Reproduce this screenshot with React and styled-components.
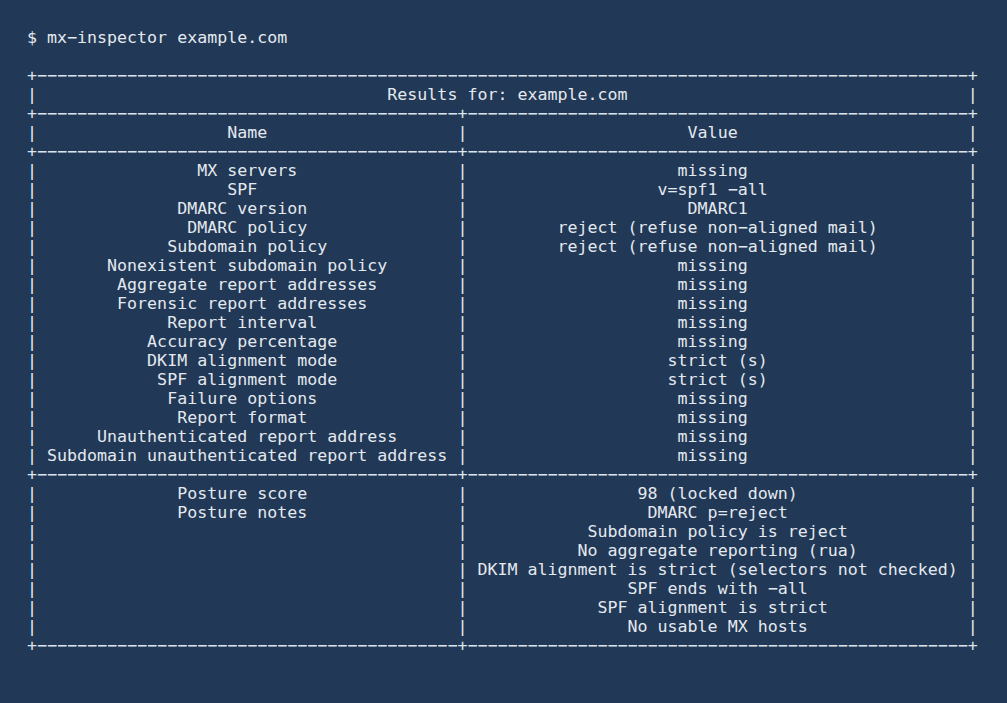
import React from "react";
import styled, { createGlobalStyle } from "styled-components";

const GlobalStyle = createGlobalStyle`
    html, body {
        margin: 0;
        padding: 0;
        background: #213856;
    }
`;

const Screen = styled.div`
    min-height: 100vh;
    box-sizing: border-box;
    padding: 28px 27px;
    background: #213856;
    color: #e4e9ef;
    font-family: "DejaVu Sans Mono", "Liberation Mono", monospace;
    font-size: 16.64px;
    line-height: 19px;
`;

const Output = styled.pre`
    margin: 0;
    font: inherit;
    white-space: pre;
`;

const Line = styled.div`
    height: 19px;
    color: ${p => (p.$border ? "#dde3ea" : "inherit")};
`;

const W1 = 42;
const W2 = 50;
const DASH = "−";

// same centering rule as python's str.center
const center = (s, w) => {
    const pad = w - s.length;
    if (pad <= 0) return s;
    const left = Math.floor(pad / 2) + (pad & w & 1);
    return " ".repeat(left) + s + " ".repeat(pad - left);
};

const sep = "+" + DASH.repeat(W1) + "+" + DASH.repeat(W2) + "+";
const topSep = "+" + DASH.repeat(W1 + W2 + 1) + "+";
const row = (a, b) => "|" + center(a, W1) + "|" + center(b, W2) + "|";

const records = [
    ["MX servers", "missing"],
    ["SPF", "v=spf1 −all"],
    ["DMARC version", "DMARC1"],
    ["DMARC policy", "reject (refuse non−aligned mail)"],
    ["Subdomain policy", "reject (refuse non−aligned mail)"],
    ["Nonexistent subdomain policy", "missing"],
    ["Aggregate report addresses", "missing"],
    ["Forensic report addresses", "missing"],
    ["Report interval", "missing"],
    ["Accuracy percentage", "missing"],
    ["DKIM alignment mode", "strict (s)"],
    ["SPF alignment mode", "strict (s)"],
    ["Failure options", "missing"],
    ["Report format", "missing"],
    ["Unauthenticated report address", "missing"],
    ["Subdomain unauthenticated report address", "missing"],
];

const posture = [
    ["Posture score", "98 (locked down)"],
    ["Posture notes", "DMARC p=reject"],
    ["", "Subdomain policy is reject"],
    ["", "No aggregate reporting (rua)"],
    ["", "DKIM alignment is strict (selectors not checked)"],
    ["", "SPF ends with −all"],
    ["", "SPF alignment is strict"],
    ["", "No usable MX hosts"],
];

const lines = [
    { text: "$ mx−inspector example.com" },
    { text: " " },
    { text: topSep, border: true },
    { text: "|" + center("Results for: example.com", W1 + W2 + 1) + "|" },
    { text: sep, border: true },
    { text: row("Name", "Value") },
    { text: sep, border: true },
    ...records.map(([a, b]) => ({ text: row(a, b) })),
    { text: sep, border: true },
    ...posture.map(([a, b]) => ({ text: row(a, b) })),
    { text: sep, border: true },
];

export default function App() {
    return (
        <>
            <GlobalStyle />
            <Screen>
                <Output>
                    {lines.map((l, i) => (
                        <Line key={i} $border={l.border}>
                            {l.text}
                        </Line>
                    ))}
                </Output>
            </Screen>
        </>
    );
}
